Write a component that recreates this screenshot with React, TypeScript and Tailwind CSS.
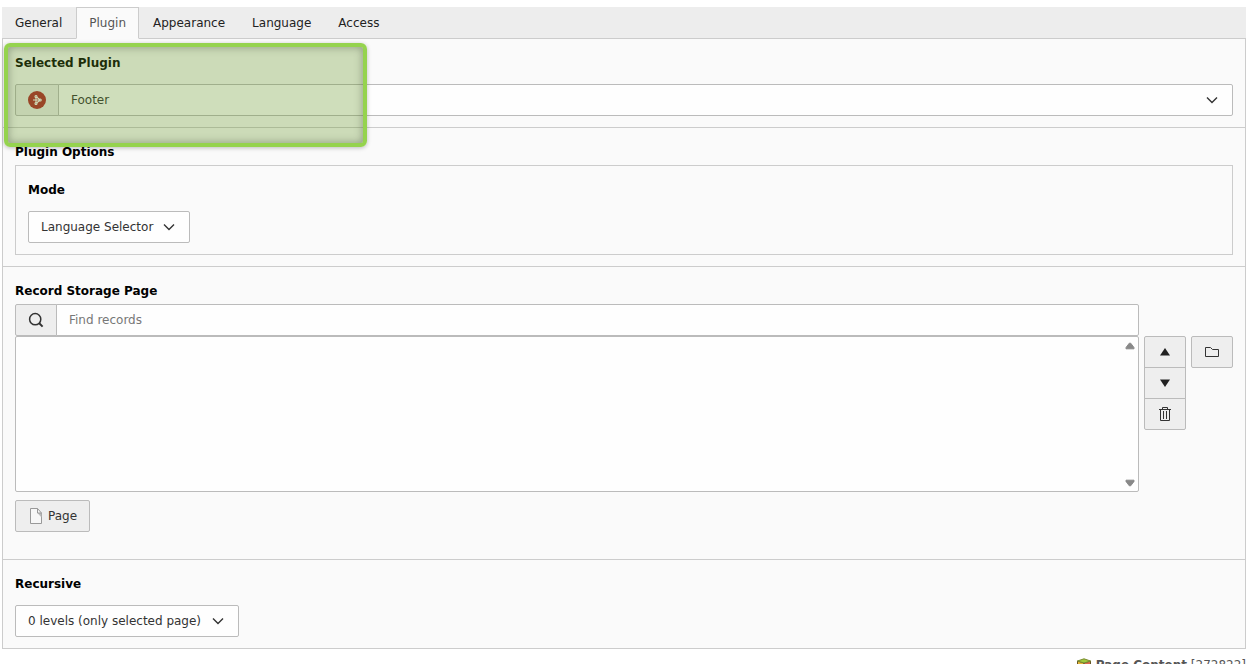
import type { ReactNode } from "react";

const tabs = ["General", "Plugin", "Appearance", "Language", "Access"];

function Chevron({ className }: { className: string }) {
  return (
    <svg viewBox="0 0 12 12" className={`pointer-events-none absolute top-[10px] size-3 ${className}`} fill="none" stroke="#333" strokeWidth="1.4">
      <path d="M1 3.5 6 8.5 11 3.5" />
    </svg>
  );
}

function Label({ htmlFor, children, tight = false }: { htmlFor: string; children: ReactNode; tight?: boolean }) {
  return (
    <label htmlFor={htmlFor} className={`block text-xs/[22px] font-bold text-black ${tight ? "mb-[2px]" : "mb-[10px]"}`}>
      {children}
    </label>
  );
}

const field = "h-8 border border-[#bbb] bg-[#fefefe] text-[#333]";
const button = "flex items-center justify-center border border-[#bbb] bg-[#eee] text-[#333]";
const iconButton = `${button} pb-px`;

export default function App() {
  return (
    <div className="h-screen overflow-hidden bg-white pt-[7px] pr-[14px] pl-[2px] font-['DejaVu_Sans',Verdana,sans-serif] text-xs text-[#222]">
      <div role="tablist" className="flex h-8 gap-px bg-[#ededed]">
        {tabs.map((tab) => (
          <button
            key={tab}
            role="tab"
            aria-selected={tab === "Plugin"}
            className={
              tab === "Plugin"
                ? "z-10 border border-[#ccc] border-b-[#fafafa] bg-[#fafafa] px-3 text-[#555]"
                : "border border-transparent px-3"
            }
          >
            {tab}
          </button>
        ))}
      </div>

      <main className="relative -mt-px border border-[#ccc] bg-[#fafafa]">
        <section className="border-b border-[#ccc] px-3 pt-[13px] pb-[11px]">
          <Label htmlFor="plugin">Selected Plugin</Label>
          <div className="flex">
            <span className="flex h-8 w-11 items-center justify-center rounded-l-xs border border-[#bbb] bg-[#eee]">
              <svg viewBox="0 0 18 18" className="size-[18px]">
                <circle cx="9" cy="9" r="9" fill="#b0242a" />
                <g fill="none" stroke="#fff" strokeWidth="1.1">
                  <circle cx="8" cy="5.5" r="1" />
                  <circle cx="8" cy="12.5" r="1" />
                  <circle cx="12.2" cy="9" r="1" />
                  <path d="M5 9h6M8 6.5v5M8.8 6.2l2.8 2.2M8.8 11.8l2.8-2.2" />
                </g>
              </svg>
            </span>
            <div className="relative -ml-px flex-1">
              <select id="plugin" className={`${field} w-full appearance-none rounded-r-xs px-3`}>
                <option>Footer</option>
              </select>
              <Chevron className="right-[15px]" />
            </div>
          </div>
        </section>

        <section className="border-b border-[#ccc] px-3 pt-[13px] pb-[11px]">
          <h2 className="mb-[2px] text-xs/[22px] font-bold text-black">Plugin Options</h2>
          <div className="border border-[#ccc] px-3 pt-[13px] pb-[11px]">
            <Label htmlFor="mode">Mode</Label>
            <div className="relative w-[162px]">
              <select id="mode" className={`${field} w-full appearance-none rounded-xs px-3`}>
                <option>Language Selector</option>
              </select>
              <Chevron className="right-[15px]" />
            </div>
          </div>
        </section>

        <section className="border-b border-[#ccc] px-3 pt-[13px] pb-[27px]">
          <Label htmlFor="find" tight>Record Storage Page</Label>
          <div className="flex items-start gap-[5px]">
            <div className="min-w-0 flex-1">
              <div className="flex">
                <span className="flex h-8 w-[42px] items-center justify-center rounded-l-xs border border-[#bbb] bg-[#eee]">
                  <svg viewBox="0 0 16 16" className="size-4" fill="none" stroke="#333" strokeWidth="1.5">
                    <circle cx="7.2" cy="7.2" r="5.6" />
                    <path d="m11 11 3.6 3.6" strokeWidth="2" />
                  </svg>
                </span>
                <input
                  id="find"
                  placeholder="Find records"
                  className={`${field} -ml-px min-w-0 flex-1 rounded-r-xs px-3 placeholder:text-[#777]`}
                />
              </div>
              <div className="relative">
                <select multiple aria-label="Selected records" className="block h-[156px] w-full appearance-none rounded-xs border border-[#bbb] bg-[#fefefe]" />
                <svg viewBox="0 0 10 8" className="absolute top-[6px] right-[4px] h-2 w-[10px]">
                  <path d="M4.3 1.2h1.4L9 5.6v1.2H1V5.6Z" fill="#888" stroke="#888" strokeLinejoin="round" />
                </svg>
                <svg viewBox="0 0 10 8" className="absolute right-[4px] bottom-[5px] h-2 w-[10px]">
                  <path d="M4.3 6.8h1.4L9 2.4V1.2H1v1.2Z" fill="#888" stroke="#888" strokeLinejoin="round" />
                </svg>
              </div>
            </div>
            <div className="mt-8 flex w-[42px] flex-col">
              <button aria-label="Move up" className={`${iconButton} h-8 rounded-t-xs`}>
                <svg viewBox="0 0 10 8" className="h-2 w-[10px]"><path d="M5 0 10 7.5H0Z" fill="#222" /></svg>
              </button>
              <button aria-label="Move down" className={`${iconButton} -mt-px h-8`}>
                <svg viewBox="0 0 10 8" className="h-2 w-[10px]"><path d="M5 8 10 .5H0Z" fill="#222" /></svg>
              </button>
              <button aria-label="Remove" className={`${iconButton} -mt-px h-8 rounded-b-xs`}>
                <svg viewBox="0 0 12 14" className="h-[14px] w-3" fill="none" stroke="#333">
                  <path d="M0 2.5h12M3.5 2.5v-2h5v2M1.5 2.5v11h9v-11M4.5 4v8M7.5 4v8" />
                </svg>
              </button>
            </div>
            <button aria-label="Browse" className={`${iconButton} mt-8 h-8 w-[42px] rounded-xs`}>
              <svg viewBox="0 0 14 12" className="h-3 w-[14px]" fill="none" stroke="#333">
                <path d="M.5 10.5v-9h5l2 2h6v7Z" />
              </svg>
            </button>
          </div>
          <button className={`${button} mt-2 h-8 w-[75px] gap-[6px] rounded-xs pl-[2px]`}>
            <svg viewBox="0 0 12 16" className="h-4 w-3">
              <path d="M.5.5h7l4 4.5v10.5H.5Z" fill="#f7f7f7" stroke="#999" />
              <path d="M7.5 5h4v4.5Z" fill="#bbb" />
              <path d="M7.5.5V5h4" fill="none" stroke="#999" />
            </svg>
            Page
          </button>
        </section>

        <section className="px-3 pt-[13px] pb-[11px]">
          <Label htmlFor="recursive">Recursive</Label>
          <div className="relative w-56">
            <select id="recursive" className={`${field} w-full appearance-none rounded-xs px-3`}>
              <option>0 levels (only selected page)</option>
            </select>
            <Chevron className="right-[15px]" />
          </div>
        </section>

        <div className="pointer-events-none absolute top-1 left-px h-[104px] w-[363px] rounded-md border-4 border-[#95d34e] bg-[#649621]/30 shadow-[inset_0_0_8px_rgba(60,70,50,0.45),0_1px_4px_rgba(0,0,0,0.25)]" />
      </main>

      <footer className="mt-2 flex items-center justify-end gap-1 leading-4 text-[#555]">
        <svg viewBox="0 0 16 16" className="size-4">
          <path d="M1.5 4 8 6v9l-6.500-3Z" fill="#e8b63a" stroke="#665526" />
          <path d="m14.500 4-6.500 2v9l6.500-3Z" fill="#dc6850" stroke="#665526" />
          <path d="M1.500 4 8 1.800l6.500 2.200L8 6Z" fill="#9fca3c" stroke="#7a8a30" />
        </svg>
        <span><strong>Page Content</strong> [272822]</span>
      </footer>
    </div>
  );
}
